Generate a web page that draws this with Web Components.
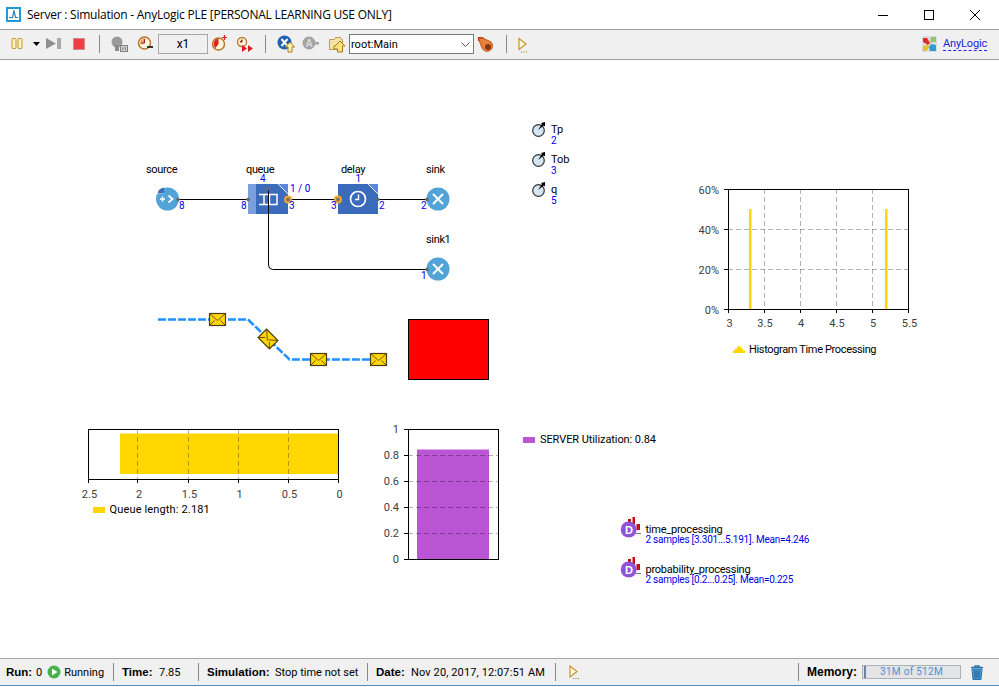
<!DOCTYPE html>
<html>
<head>
<meta charset="utf-8">
<title>AnyLogic Simulation</title>
<style>
  html, body { margin: 0; padding: 0; background: #fff; }
  body { font-family: "Roboto", sans-serif; font-size: 11px; color: #000; }
</style>
</head>
<body>
<al-window>
  <al-titlebar slot="title" text="Server : Simulation - AnyLogic PLE [PERSONAL LEARNING USE ONLY]"></al-titlebar>
  <al-toolbar slot="tools"></al-toolbar>
  <al-canvas slot="main">
    <al-process></al-process>
    <al-path></al-path>
    <al-variable name="Tp" value="2" at="532,122"></al-variable>
    <al-variable name="Tob" value="3" at="532,152"></al-variable>
    <al-variable name="q" value="5" at="532,182"></al-variable>
    <al-chart kind="histogram" at="690,180"></al-chart>
    <al-chart kind="queue" at="78,420"></al-chart>
    <al-chart kind="server" at="380,415"></al-chart>
    <al-dataset name="time_processing" stats="2 samples [3.301...5.191]. Mean=4.246" at="618,515"></al-dataset>
    <al-dataset name="probability_processing" stats="2 samples [0.2...0.25]. Mean=0.225" at="618,555"></al-dataset>
  </al-canvas>
  <al-statusbar slot="status"></al-statusbar>
</al-window>

<script>
const FONT = '"Roboto", "Liberation Sans", sans-serif';
const BOLD = '"Liberation Sans", sans-serif';

// places a canvas item, coordinates are page pixels, the canvas starts at y=60
function placeAt(el) {
  const [x, y] = el.getAttribute("at").split(",").map(Number);
  el.style.left = x + "px";
  el.style.top = y - 60 + "px";
  return [x, y];
}

class AlWindow extends HTMLElement {
  constructor() {
    super();
    this.attachShadow({ mode: "open" });
    this.shadowRoot.innerHTML = `
    <style>
      :host { display: flex; flex-direction: column; width: 999px; height: 687px; box-sizing: border-box;
              border-bottom: 1px solid #fff; overflow: hidden; }
      .main { flex: 1; min-height: 0; display: flex; }
      ::slotted(al-canvas) { flex: 1; }
    </style>
    <slot name="title"></slot>
    <slot name="tools"></slot>
    <div class="main"><slot name="main"></slot></div>
    <slot name="status"></slot>`;
  }
}

class AlTitlebar extends HTMLElement {
  constructor() {
    super();
    this.attachShadow({ mode: "open" });
    this.shadowRoot.innerHTML = `
    <style>
      :host { display: flex; align-items: center; height: 29px; background: #fff; padding-left: 6px;
              font: 12px "Open Sans", sans-serif; color: #000; }
      .title { margin-left: 6px; flex: 1; white-space: nowrap; letter-spacing: -0.24px; }
      .btn { width: 46px; height: 29px; display: flex; align-items: center; justify-content: center; }
      svg { display: block; }
    </style>
    <svg width="15" height="15" viewBox="0 0 15 15">
      <rect x="1" y="1" width="13" height="13" fill="#fff" stroke="#1f9ad6" stroke-width="2"/>
      <path d="M3 10.500h3.500l1.500-7 1.500 7h2.500" fill="none" stroke="#2a7fc0" stroke-width="1.200"/>
    </svg>
    <span class="title"></span>
    <div class="btn"><svg width="10" height="10"><path d="M0 5.500h10" stroke="#000"/></svg></div>
    <div class="btn"><svg width="10" height="10"><rect x="0.500" y="0.500" width="9" height="9" fill="none" stroke="#000"/></svg></div>
    <div class="btn" style="margin-right:1px"><svg width="10" height="10"><path d="M0 0l10 10M10 0L0 10" stroke="#000"/></svg></div>`;
    this.shadowRoot.querySelector(".title").textContent = this.getAttribute("text");
  }
}

class AlToolbar extends HTMLElement {
  constructor() {
    super();
    this.attachShadow({ mode: "open" });
    const icon = (w, ml, body) => `<svg width="${w}" height="22" viewBox="0 0 ${w} 22" style="margin-left:${ml}px">${body}</svg>`;
    const sep = (ml) => `<i class="sep" style="margin-left:${ml}px"></i>`;
    this.shadowRoot.innerHTML = `
    <style>
      :host { display: flex; align-items: center; height: 31px; box-sizing: border-box; background: #f0f0f0; padding-bottom: 1px;
              border-top: 1px solid #a0a0a0; border-bottom: 1px solid #a0a0a0; font: 11px ${FONT}; }
      svg { display: block; flex: none; }
      .sep { display: block; width: 1px; height: 18px; background: #8a8a8a; }
      .x1 { width: 50px; height: 20px; box-sizing: border-box; border: 1px solid #a8a8a8; margin-left: 4px;
            text-align: center; line-height: 18px; font-size: 12px; }
      .combo { width: 125px; height: 20px; box-sizing: border-box; border: 1px solid #7a7a7a; background: #fff; margin-left: 3px;
               display: flex; align-items: center; padding-left: 1px; justify-content: space-between; }
      .logo { margin-left: auto; display: flex; align-items: center; padding-right: 12px; }
      .logo span { margin-left: 6px; color: #2222dd; border-bottom: 1px dashed #2222dd; line-height: 12px; letter-spacing: -0.17px; }
    </style>
    ${icon(12, 11, '<rect x="1" y="5.500" width="4" height="10" rx="1" fill="#fff3b8" stroke="#c6952c"/><rect x="7" y="5.500" width="4" height="10" rx="1" fill="#fff3b8" stroke="#c6952c"/>')}
    ${icon(7, 10, '<path d="M0 9h7l-3.500 4z" fill="#000"/>')}
    ${icon(15, 6, '<path d="M0 5l10 5.500L0 16z" fill="#8f8f8f"/><rect x="11" y="5" width="4" height="11" fill="#a8a8a8"/>')}
    ${icon(12, 12, '<rect x="0.500" y="5.500" width="11" height="11" fill="#ef3f45" stroke="#d08a8a"/>')}
    ${sep(14)}
    ${icon(18, 11, '<circle cx="6" cy="9" r="5.500" fill="#9a9a9a"/><rect x="4" y="12" width="4" height="6" fill="#8a8a8a"/><rect x="9.500" y="12.500" width="7" height="6" fill="#cfcfcf" stroke="#808080"/><path d="M12 14v3M14.500 14v3" stroke="#808080"/>')}
    ${icon(17, 8, '<circle cx="7.500" cy="10" r="6" fill="#fff5d8" stroke="#b8772a" stroke-width="1.500"/><path d="M7.500 10V5a5 5 0 0 0-4 7z" fill="#e8a060"/><path d="M7.500 10V6M7.500 10h-3" stroke="#a02020"/><rect x="10" y="13" width="6" height="2" fill="#333"/>')}
    <div class="x1">x1</div>
    ${icon(18, 3, '<circle cx="7.500" cy="11" r="6" fill="#fff5d8" stroke="#b8772a" stroke-width="1.500"/><path d="M7.500 11V5.500a5.500 5.500 0 0 0-3 9.500z" fill="#e02020"/><path d="M11 4.500h5M13.500 2v5" stroke="#d82020" stroke-width="1.200"/>')}
    ${icon(19, 7, '<circle cx="6" cy="9" r="4.500" fill="#fff5d8" stroke="#b8772a" stroke-width="1.300"/><path d="M6 6.500V9H4" stroke="#a02020"/><path d="M6 12l5 3.500-5 3.500zM12 12l5 3.500-5 3.500z" fill="#d82020"/>')}
    ${sep(10)}
    ${icon(18, 11, '<circle cx="7.500" cy="9.500" r="7" fill="#1f63b0"/><path d="M4.500 6l6 7M10.500 6l-6 7" stroke="#fff" stroke-width="2"/><path d="M13 9l4.500 5h-2.500v5h-4v-5H8.500z" fill="#fff0b0" stroke="#a67a1c"/>')}
    ${icon(18, 7, '<circle cx="7" cy="10" r="6.500" fill="#a4a4a4"/><path d="M13 9h4v2.500h-4z" fill="#a4a4a4"/><text x="3.500" y="14" font-size="10" font-weight="700" fill="#ddd" font-family="Liberation Sans">A</text>')}
    ${icon(18, 8, '<path d="M1.500 6.500h5l1-2h5l1 2h1v10h-13z" fill="#f6e3a8" stroke="#b89a5a"/><path d="M11 8l5 5h-2.500v6h-5v-3H5v-3H6z" fill="#ffe07a" stroke="#a67a1c" transform="translate(1 0)"/>')}
    <div class="combo"><span>root:Main</span><svg width="9" height="5" style="margin-right:3px"><path d="M0.500 0.500l4 4 4-4" fill="none" stroke="#555"/></svg></div>
    ${icon(19, 3, '<path d="M1 4.500h4l9 4.500a5.500 5.500 0 1 1-9 6z" fill="#e8803a" stroke="#c05a20"/><circle cx="11" cy="14" r="3" fill="#8a3810"/><path d="M1.500 5h5M1.500 5v3" stroke="#b83000"/>')}
    ${sep(10)}
    ${icon(11, 11, '<path d="M1 5.500l7 5.500-7 5.500z" fill="#fffbe0" stroke="#c6952c" stroke-width="1.200"/><path d="M3 19h1M5.500 19h1M8 19h1" stroke="#a07018"/>')}
    <div class="logo">
      <svg width="15" height="16" viewBox="0 0 15 16">
        <rect width="15" height="16" fill="#dcdcdc"/>
        <path d="M1 2h4l3 5-2 2-5-3z" fill="#e02a2a"/><path d="M9 1h5v5H10L8 7z" fill="#8fc46a"/>
        <path d="M1 10l5-1 1 2-3 4H1z" fill="#e8c020"/><path d="M9 8l5 1v6H8l-1-4z" fill="#2a9fd6"/>
      </svg>
      <span>AnyLogic</span>
    </div>`;
  }
}

class AlCanvas extends HTMLElement {
  constructor() {
    super();
    this.attachShadow({ mode: "open" });
    this.shadowRoot.innerHTML = `
    <style>:host { display: block; position: relative; background: #fff; overflow: hidden; }</style>
    <slot></slot>`;
  }
}

// the flowchart, drawn in page coordinates
class AlProcess extends HTMLElement {
  constructor() {
    super();
    this.attachShadow({ mode: "open" });
    const dot = (x, y) => `<circle cx="${x}" cy="${y}" r="1.800" fill="#666"/>`;
    const ring = (x, y) => `<circle cx="${x}" cy="${y}" r="3" fill="#777" stroke="#f5a623" stroke-width="2"/>`;
    const label = (x, y, t) => `<text x="${x}" y="${y}" class="l">${t}</text>`;
    const num = (x, y, t) => `<text x="${x}" y="${y}" class="n">${t}</text>`;
    const sink = (x, y) => `<circle cx="${x}" cy="${y}" r="11.500" fill="#52a3d8"/><path d="M${x - 5} ${y - 5}l10 10M${x + 5} ${y - 5}l-10 10" stroke="#fff" stroke-width="2"/>`;
    this.shadowRoot.innerHTML = `
    <style>
      :host { position: absolute; left: 140px; top: 95px; }
      svg { display: block; }
      .l { font: 11px ${FONT}; fill: #000; letter-spacing: -0.35px; }
      .n { font: 10px ${FONT}; fill: #0000ee; }
    </style>
    <svg width="320" height="130" viewBox="140 155 320 130">
      ${label(146, 173, "source")}${label(246, 173, "queue")}${label(341, 173, "delay")}${label(426, 173, "sink")}${label(426, 243, "sink1")}
      <rect x="248" y="184" width="8" height="30" fill="#7b9fdc"/>
      <rect x="256" y="184" width="32" height="30" fill="#3b6cbb"/>
      <path d="M278 184h10v10z" fill="#5a86dc"/><path d="M278 184l10 10" stroke="#e8f0ff"/>
      <rect x="338" y="184" width="40" height="30" fill="#3b6cbb"/>
      <path d="M368 184h10v10z" fill="#5a86dc"/><path d="M368 184l10 10" stroke="#e8f0ff"/>
      <path d="M259 194.500h18v10h-18M264 194.500v10M269.500 194.500v10M277 194.500v10" fill="none" stroke="#fff" stroke-width="1.500"/>
      <circle cx="358" cy="199" r="7.500" fill="none" stroke="#fff" stroke-width="1.700"/>
      <path d="M358.500 194.500v5h-3.500" fill="none" stroke="#fff" stroke-width="1.400"/>
      <circle cx="167.500" cy="199" r="11.500" fill="#52a3d8"/>
      <path d="M157 187.500h7v6.500h-8z" fill="#fff"/><path d="M157.500 193.500c0.500-3 3-5.500 6.500-6v6z" fill="#3b6cbb"/>
      <path d="M160 199h5M162.500 196.500v5" stroke="#fff" stroke-width="1.500"/>
      <path d="M168.500 195.500l4 3.500-4 3.500" fill="none" stroke="#fff" stroke-width="1.800"/>
      ${sink(438, 199)}${sink(438, 269)}
      <path d="M178 199.500h70M288 199.500h50M378 199.500h50" stroke="#000" fill="none"/>
      <path d="M268.500 189v76q0 4 4 4.500H428" stroke="#000" fill="none"/>
      ${dot(178, 199.5)}${dot(248, 199.5)}${dot(268, 189)}${dot(378, 199.5)}${dot(427, 199.5)}${dot(427, 269.5)}
      ${ring(288, 199.5)}${ring(338, 199.5)}
      ${num(179, 209, "8")}${num(241, 209, "8")}${num(260, 182, "4")}${num(290, 192, "1 / 0")}
      ${num(289, 209, "3")}${num(331, 209, "3")}${num(355.500, 182, "1")}${num(379, 209, "2")}
      ${num(421, 209, "2")}${num(421, 279, "1")}
    </svg>`;
  }
}

// the conveyor with its messages and the red shape next to it
class AlPath extends HTMLElement {
  constructor() {
    super();
    this.attachShadow({ mode: "open" });
    const mail = (x, y, rot) => `<g transform="translate(${x} ${y}) rotate(${rot})">
      <rect x="-8" y="-6" width="16" height="12" fill="#ffd700" stroke="#4a3c14" stroke-width="1.200"/>
      <path d="M-8 -6L0 1l8-7M-8 6l5-5M8 6L3 1" fill="none" stroke="#6a5418"/></g>`;
    this.shadowRoot.innerHTML = `
    <style>:host { position: absolute; left: 150px; top: 245px; } svg { display: block; }</style>
    <svg width="350" height="85" viewBox="150 305 350 85">
      <path d="M158 319.500h90L289.500 359.500H385" fill="none" stroke="#1e90ff" stroke-width="2.500" stroke-dasharray="8 2"/>
      ${mail(217.500, 319.500, 0)}${mail(268, 339, 45)}${mail(318.500, 359.500, 0)}${mail(378.500, 359.500, 0)}
      <rect x="408.500" y="319.500" width="80" height="60" fill="#ff0000" stroke="#000"/>
    </svg>`;
  }
}

class AlVariable extends HTMLElement {
  constructor() {
    super();
    this.attachShadow({ mode: "open" });
    this.shadowRoot.innerHTML = `
    <style>
      :host { position: absolute; display: flex; font: 11px ${FONT}; color: #000; }
      svg { display: block; flex: none; }
      .t { margin-left: 5px; display: flex; flex-direction: column; line-height: 12px; padding-top: 2px; }
      .v { color: #0000ee; font-size: 10px; line-height: 9px; }
    </style>
    <svg width="14" height="16" viewBox="0 0 14 16">
      <circle cx="6.500" cy="8.500" r="5.800" fill="#d4e6f4" stroke="#333" stroke-width="1.200"/>
      <path d="M6 8l4-6-1-1 4-1 0 4.500-1.200-1z" fill="#000"/>
    </svg>
    <div class="t"><span class="n"></span><span class="v"></span></div>`;
    this.shadowRoot.querySelector(".n").textContent = this.getAttribute("name");
    this.shadowRoot.querySelector(".v").textContent = this.getAttribute("value");
  }
  connectedCallback() { placeAt(this); }
}

class AlDataset extends HTMLElement {
  constructor() {
    super();
    this.attachShadow({ mode: "open" });
    this.shadowRoot.innerHTML = `
    <style>
      :host { position: absolute; display: flex; font: 11px ${FONT}; color: #000; }
      svg { display: block; flex: none; }
      .t { margin-left: 4.500px; display: flex; flex-direction: column; line-height: 11px; padding-top: 9px; white-space: nowrap; letter-spacing: -0.24px; }
      .s { color: #0000ee; font-size: 10px; line-height: 9px; }
    </style>
    <svg width="23" height="24" viewBox="0 0 23 24">
      <path d="M10 4h3v12h-3zM14.500 2h2.500v14h-2.500zM18.500 9h3.500v6h-3.500z" fill="#c01010"/>
      <path d="M18 18.500h5" stroke="#777"/>
      <circle cx="10.700" cy="14.500" r="8" fill="#9055d8"/>
      <text x="7" y="18.500" font-size="11" font-weight="700" fill="#fff" font-family="Liberation Sans">D</text>
    </svg>
    <div class="t"><span class="n"></span><span class="s"></span></div>`;
    this.shadowRoot.querySelector(".n").textContent = this.getAttribute("name");
    this.shadowRoot.querySelector(".s").textContent = this.getAttribute("stats");
  }
  connectedCallback() { placeAt(this); }
}

const CHARTS = {
  histogram: {
    w: 240, h: 185, box: [728, 189, 180, 120], color: "#ffd700",
    vgrid: [764.5, 800.5, 836.5, 872.5], hgrid: [229.5, 269.5],
    bars: [[749, 209, 2.5, 100], [885, 209, 2.5, 100]],
    xlabels: [[729.5, "3"], [765, "3.5"], [801, "4"], [837, "4.5"], [873, "5"], [909.5, "5.5"]], xbase: 327,
    xticks: [728, 764, 800, 836, 872, 908],
    ylabels: [[194, "60%"], [234, "40%"], [274, "20%"], [314, "0%"]], yright: 719,
    yticks: [189, 229, 269, 309],
    legend: { x: 749, y: 353, ls: -0.35, text: "Histogram Time Processing", swatch: '<path d="M733 353v-2.500h2v-2h2v-2h4v2h2v2h2v2.500z" fill="#ffd700"/>' }
  },
  queue: {
    w: 290, h: 100, box: [88, 429, 250, 50], color: "#ffd700",
    vgrid: [137.5, 188, 238.5, 288.5], hgrid: [],
    bars: [[120, 433.5, 218, 40.5]],
    xlabels: [[89.5, "2.5"], [139, "2"], [189.5, "1.5"], [239.5, "1"], [289.5, "0.5"], [339.5, "0"]], xbase: 498,
    xticks: [88, 137.5, 188, 238.5, 288.5, 338],
    ylabels: [], yticks: [],
    legend: { x: 109.5, y: 513, ls: 0.15, text: "Queue length: 2.181", swatch: '<rect x="93" y="507" width="12" height="6" fill="#ffd700"/>' }
  },
  server: {
    w: 285, h: 155, box: [408, 429, 90, 130], color: "#ba55d3",
    vgrid: [], hgrid: [455, 481, 507, 533],
    bars: [[417, 449.5, 72, 109.5]],
    xlabels: [], xticks: [],
    ylabels: [[433, "1"], [459, "0.8"], [485, "0.6"], [511, "0.4"], [537, "0.2"], [563, "0"]], yright: 399,
    yticks: [429, 455, 481, 507, 533, 559],
    legend: { x: 540, y: 443, ls: -0.08, text: "SERVER Utilization: 0.84", swatch: '<rect x="523" y="437" width="12" height="6" fill="#ba55d3"/>' }
  }
};

class AlChart extends HTMLElement {
  constructor() {
    super();
    this.attachShadow({ mode: "open" });
    const c = CHARTS[this.getAttribute("kind")];
    const [bx, by, bw, bh] = c.box;
    const [x0, y0] = this.getAttribute("at").split(",").map(Number);
    const bars = c.bars.map((b) => `<rect x="${b[0]}" y="${b[1]}" width="${b[2]}" height="${b[3]}" fill="${c.color}"/>`).join("");
    const grid = c.vgrid.map((x) => `<path d="M${Math.floor(x) + 0.5} ${by}v${bh}"/>`).join("") +
                 c.hgrid.map((y) => `<path d="M${bx} ${y + (y % 1 ? 0 : 0.5)}h${bw}"/>`).join("");
    const xticks = c.xticks.map((x) => `<path d="M${Math.floor(x) + 0.5} ${by + bh}v4"/>`).join("");
    const yticks = c.yticks.map((y) => `<path d="M${bx - 4} ${y + 0.5}h4"/>`).join("");
    const xl = c.xlabels.map((l) => `<text x="${l[0]}" y="${c.xbase}" text-anchor="middle">${l[1]}</text>`).join("");
    const yl = c.ylabels.map((l) => `<text x="${c.yright}" y="${l[0]}" text-anchor="end">${l[1]}</text>`).join("");
    this.shadowRoot.innerHTML = `
    <style>
      :host { position: absolute; }
      svg { display: block; }
      text { font: 11px ${FONT}; fill: #404040; }
      .legend text { fill: #000; letter-spacing: ${c.legend.ls}px; }
      .grid path { stroke: #000; stroke-opacity: 0.3; stroke-dasharray: 5 3; fill: none; }
      .ticks path { stroke: #000; fill: none; }
    </style>
    <svg width="${c.w}" height="${c.h}" viewBox="${x0} ${y0} ${c.w} ${c.h}">
      ${bars}
      <g class="grid">${grid}</g>
      <rect x="${bx + 0.5}" y="${by + 0.5}" width="${bw}" height="${bh}" fill="none" stroke="#000"/>
      <g class="ticks">${xticks}${yticks}</g>
      ${xl}${yl}
      <g class="legend">${c.legend.swatch}<text x="${c.legend.x}" y="${c.legend.y}">${c.legend.text}</text></g>
    </svg>`;
  }
  connectedCallback() { placeAt(this); }
}

class AlStatusbar extends HTMLElement {
  constructor() {
    super();
    this.attachShadow({ mode: "open" });
    this.shadowRoot.innerHTML = `
    <style>
      :host { display: flex; align-items: center; height: 28px; box-sizing: border-box; background: #f0f0f0;
              border-top: 1px solid #a8a8a8; border-bottom: 1px solid #4a90c8; font: 11px ${FONT}; color: #000; white-space: nowrap; }
      .cell { display: flex; align-items: center; box-sizing: border-box; height: 18px; padding-left: 8px; border-right: 1px solid #8a8a8a; flex: none; }
      b { font: 700 11.5px ${BOLD}; margin-right: 4px; flex: none; }
      svg { display: block; flex: none; }
      .mem { width: 99px; height: 14px; box-sizing: border-box; border: 1px solid #a8b0b8; background: #e4e4e4;
             position: relative; text-align: center; font-size: 10px; line-height: 11px; color: #4a90d8; letter-spacing: 0.3px; }
      .mem i { position: absolute; left: 1px; top: 0; bottom: 0; width: 2px; background: #6a80a0; }
    </style>
    <div class="cell" style="width:114px;padding-left:6px"><b style="width:25px;margin-right:5px">Run:</b>0
      <svg width="14" height="14" viewBox="0 0 14 14" style="margin:0 3px 0 5px"><circle cx="7" cy="7" r="6.500" fill="#3fb54a"/><path d="M5 3.500L10.500 7 5 10.500z" fill="#fff"/></svg>Running</div>
    <div class="cell" style="width:85px"><b style="width:31px;margin-right:6px">Time:</b>7.85</div>
    <div class="cell" style="width:169px"><b style="width:64px">Simulation:</b>Stop time not set</div>
    <div class="cell" style="width:188px"><b style="width:31px">Date:</b><span style="letter-spacing:0.12px">Nov 20, 2017, 12:07:51 AM</span></div>
    <div class="cell" style="width:243px;padding-left:13px"><svg width="11" height="16" viewBox="0 0 11 16"><path d="M1 2l7 5.500L1 13z" fill="#fffbe0" stroke="#c6952c" stroke-width="1.200"/><path d="M4 14.500h1M6.500 14.500h1M9 14.500h1" stroke="#a07018"/></svg></div>
    <div class="cell" style="border:0;padding-left:8px"><b style="width:50px;margin-right:5px;font-size:12px">Memory:</b><div class="mem"><i></i>31M of 512M</div>
      <svg width="14" height="15" viewBox="0 0 14 15" style="margin-left:9px"><path d="M1 2.500h12M5 2V0.800h4V2" fill="none" stroke="#2a6fa8" stroke-width="1.300"/><path d="M2 4h10l-1 10.500H3z" fill="#4a9ad0" stroke="#2a6fa8"/><path d="M5 5.500v7.500M7 5.500v7.500M9 5.500v7.500" stroke="#1d5a8a"/></svg></div>`;
  }
}

customElements.define("al-window", AlWindow);
customElements.define("al-titlebar", AlTitlebar);
customElements.define("al-toolbar", AlToolbar);
customElements.define("al-canvas", AlCanvas);
customElements.define("al-process", AlProcess);
customElements.define("al-path", AlPath);
customElements.define("al-variable", AlVariable);
customElements.define("al-dataset", AlDataset);
customElements.define("al-chart", AlChart);
customElements.define("al-statusbar", AlStatusbar);
</script>
</body>
</html>
